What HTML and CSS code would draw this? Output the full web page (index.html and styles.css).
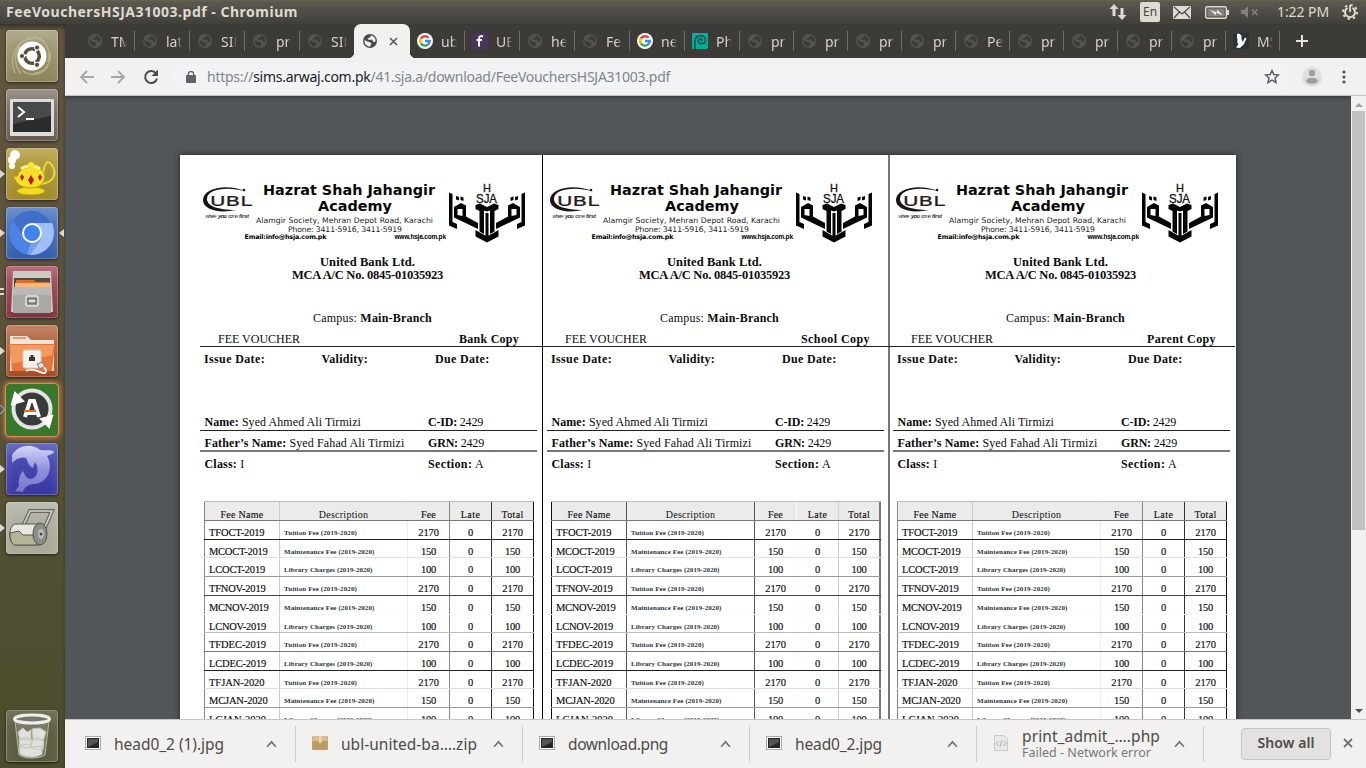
FILE: index.html
```html
<!DOCTYPE html>
<html lang="en">
<head>
<meta charset="utf-8">
<title>FeeVouchersHSJA31003.pdf - Chromium</title>
<link rel="stylesheet" href="styles.css">
</head>
<body>
<div class="desktop">
  <header class="panel">
    <span class="panel-title" data-w="292">FeeVouchersHSJA31003.pdf - Chromium</span>
    <div class="indicators">
      <svg width="18" height="18" viewBox="0 0 18 18" fill="#dfdbd2"><path d="M5 1 9.500 6H6.500V13H3.500V6H.5zM13 17 8.500 12H11.500V5H14.500V12H17.500z"/></svg>
      <span class="lang">En</span>
      <svg class="ind-mail" width="18" height="13" viewBox="0 0 18 13"><rect width="18" height="13" rx="1" fill="#dfdbd2"/><path d="M1 1 9 8 17 1M1 12 6.500 6M17 12 11.500 6" fill="none" stroke="#4a4943" stroke-width="1.300"/></svg>
      <svg class="ind-battery" width="24" height="13" viewBox="0 0 24 13"><rect x=".7" y=".7" width="20.600" height="11.600" rx="1.500" fill="none" stroke="#dfdbd2" stroke-width="1.400"/><rect x="2.500" y="2.500" width="17" height="8" fill="#85827a"/><path d="M22 4h2v5h-2z" fill="#dfdbd2"/><path d="M5 4 12 6.500V3.500L18 9.500 11 6.800V9.500z" fill="#efece4"/></svg>
      <svg class="ind-sound" width="18" height="12" viewBox="0 0 18 12"><path d="M0 4H3L7 0V12L3 8H0z" fill="#84817a"/><path d="M11 3.500 16.500 9M16.500 3.500 11 9" stroke="#84817a" stroke-width="1.600"/></svg>
      <span class="clock" data-w="52">1:22 PM</span>
      <svg class="ind-gear" width="16" height="16" viewBox="0 0 16 16" fill="none" stroke="#dfdbd2"><circle cx="8" cy="8" r="7" stroke-width="2" stroke-dasharray="2.400 3.100"/><path d="M5.500 3.800a5 5 0 1 0 5 0" stroke-width="2"/><path d="M8 1V8" stroke-width="1.800"/></svg>
    </div>
  </header>

  <nav class="launcher">
    <div class="tile tile-dash"><svg viewBox="0 0 52 52"><path d="M9 43C2 27 11 9 28 8M15 44C8 35 8 24 14 16M27 7C39 8 46 20 42 32M28 43C39 43 46 33 44 22M16 40C25 48 37 44 42 36" fill="none" stroke="#c9c5a8" stroke-width="1.500" opacity=".6"/><circle cx="26" cy="26" r="14.500" fill="#fff"/><circle cx="26" cy="26" r="7.300" fill="none" stroke="#55513a" stroke-width="3.500" stroke-dasharray="13.300 2" stroke-dashoffset="6"/><g fill="#55513a" stroke="#fff"><circle cx="16" cy="26" r="2.600"/><circle cx="31" cy="17.500" r="2.600"/><circle cx="31" cy="34.800" r="2.600"/></g></svg></div>
    <div class="tile tile-term"><svg viewBox="0 0 52 52"><rect x="4" y="10" width="44" height="37" rx="1" fill="#dcdcd8"/><rect x="7" y="13" width="38" height="30" fill="#2a2b2a"/><path d="M7 13H45V27L7 35z" fill="#474a48"/><path d="M12 18 18 23 12 28M20 30H28" fill="none" stroke="#fff" stroke-width="2"/></svg></div>
    <div class="tile tile-tea"><span class="pip"></span><svg viewBox="0 0 52 52"><g fill="#fff"><circle cx="9" cy="7" r="5"/><circle cx="6" cy="12" r="4"/><circle cx="6" cy="18" r="3"/></g><path d="M37 27C38 14 42 12 45 16 52 25 48 34 36 36" fill="none" stroke="#eadc35" stroke-width="2"/><ellipse cx="25" cy="43" rx="14" ry="4" fill="#f3dc20" stroke="#bd9f13"/><path d="M6 24C8 29 10 30 12 27 13 18 35 16 38 25 41 34 34 40 25 40 14 40 9 35 6 24z" fill="#f5df27" stroke="#bd9f13"/><path d="M15 21C20 17 30 17 34 21" fill="none" stroke="#fff18c" stroke-width="3"/><circle cx="25" cy="17" r="3" fill="#f6e339"/><path d="M25 27 28 32 25 37 22 32zM16 26 18 29 16 33 14 29zM34 26 36 29 34 33 32 29z" fill="#ba1d14"/></svg></div>
    <div class="tile tile-chromium"><span class="pip"></span><span class="pip pip-right"></span><svg viewBox="0 0 52 52"><circle cx="26" cy="26" r="22" fill="#739fee"/><path d="M7 14C15 0 37 0 45 16H26L17 30z" fill="#416fc8"/><path d="M7 14 18 31 25 36 21 47C6 45-1 28 7 14z" fill="#4c83e4"/><path d="M46 16H26L36 26 35 33 24 48C42 48 52 32 46 16z" fill="#a0bff6"/><circle cx="26" cy="26" r="10" fill="#fff"/><circle cx="26" cy="26" r="8" fill="#4284ee"/></svg></div>
    <div class="tile tile-files"><span class="bars"></span><svg viewBox="0 0 52 52"><path d="M7 5H45L47 46H5z" fill="#cecbc7"/><path d="M8 12H44V22H8z" fill="#504b45"/><path d="M10 14H28L30 16H43V22H10z" fill="#d96f2e"/><path d="M9 17H44V23H9z" fill="#f5b878"/><path d="M7 21H45V47H7z" fill="#a8a8a5"/><path d="M7 21H45V29H7z" fill="#bab9b6"/><rect x="20" y="30" width="12" height="10" rx="2" fill="#999" stroke="#e5e5e2" stroke-width="1.500"/><rect x="22" y="33" width="8" height="4" fill="#e6e6e4" stroke="#555"/></svg></div>
    <div class="tile tile-net"><span class="pip"></span><svg viewBox="0 0 52 52"><path d="M4 11H21L25 15H48V46H4z" fill="#efe4da"/><path d="M7 13H20" stroke="#ef9a62" stroke-width="2"/><path d="M3 19H49L46 46H6z" fill="#e8753a"/><path d="M4 20H48L46 30 5 39z" fill="#f39a61"/><rect x="17" y="25" width="18" height="18" rx="2" fill="#f4f1ed" stroke="#ccc"/><path d="M23 32H24.500V30H27.500V32H29V36H23z" fill="#3c3932"/><path d="M20 46C28 40 40 54 40 45L36 40" fill="none" stroke="#f3f3f3" stroke-width="1.800"/><path d="M31 39 36 37 39 41 34 44z" fill="#ddd" stroke="#777"/></svg></div>
    <div class="tile tile-update"><span class="pip pip-open"></span><svg viewBox="0 0 52 52"><circle cx="26" cy="25" r="18.500" fill="#373b39" stroke="#e4e4e4" stroke-width="4"/><path d="M6 20 9 9 17 17zM46 32 43 43 35 35z" fill="#fff" stroke="#fff" stroke-width="2"/><path d="M19 33 24 17H28L33 33M20 29H32" fill="none" stroke="#fff" stroke-width="4"/><path d="M18 27H30" stroke="#f06a27" stroke-width="2"/></svg></div>
    <div class="tile tile-dolphin"><span class="pip"></span><svg viewBox="0 0 52 52"><defs><linearGradient id="dolphinSkin" x2="0" y2="1"><stop stop-color="#d4d5fa"/><stop offset=".5" stop-color="#9293dc"/><stop offset="1" stop-color="#7576c9"/></linearGradient></defs><path d="M6 12C12 2 26 0 34 7 40 8 46 6 48 9 46 12 42 12 41 13 48 25 42 40 28 41 22 41 18 45 17 49L9 48 13 43C12 37 14 31 17 28 19 33 21 36 25 36 34 34 32 23 29 19L27 25C22 23 22 18 20 15 15 13 9 17 6 20z" fill="url(#dolphinSkin)"/></svg></div>
    <div class="tile tile-roll"><span class="pip"></span><svg viewBox="0 0 52 52"><path d="M17 24 24 9H46L37 30" fill="none" stroke="#65665f" stroke-width="4"/><path d="M17 24 24 9H46L37 30" fill="none" stroke="#d2d3cf" stroke-width="1.700"/><path d="M9 22H33V43H9C2 41 2 24 9 22z" fill="#e7e7df" stroke="#55574e"/><path d="M4 31 13 29 17 33H31V43H8C5 41 4 36 4 31z" fill="#b5b496" stroke="#55574e"/><ellipse cx="34" cy="32" rx="7" ry="11" fill="#8c8e88" stroke="#4f514c"/><ellipse cx="35" cy="32" rx="3" ry="5" fill="#bbbdb6"/><circle cx="35" cy="32" r="1.500" fill="#444"/></svg></div>
    <div class="tile tile-trash"><svg viewBox="0 0 52 52"><path d="M9 9 13 45C18 49 34 49 39 45L43 9z" fill="#8e8d75" fill-opacity=".6"/><g fill="#e0e0dc" stroke="#c4c4c0"><path d="M12 22 17 18 21 22 25 20 25 29 14 30zM26 19 34 18 40 22 37 31 27 29zM13 29 22 27 27 31 23 38 14 37zM25 30 31 27 38 31 37 40 25 38zM13 36 20 34 28 37 36 36 36 44C29 49 18 47 14 44z"/></g><path d="M9 11 13 45C19 49 33 49 39 45L43 11" fill="none" stroke="#b6b6a6"/><ellipse cx="26" cy="9" rx="17.500" ry="4" fill="#77766a" stroke="#eee" stroke-width="3"/></svg></div>
  </nav>

  <main class="browser">
    <div class="tabs" id="tabs"></div>
    <div class="toolbar">
      <svg class="nav-back" width="16" height="14" viewBox="0 0 16 14" fill="none" stroke="#a8a7a6" stroke-width="1.800"><path d="M15 7H2M8 1 2 7 8 13"/></svg>
      <svg class="nav-fwd" width="16" height="14" viewBox="0 0 16 14" fill="none" stroke="#a8a7a6" stroke-width="1.800"><path d="M0 7H13M7 1 13 7 7 13"/></svg>
      <svg class="nav-reload" width="16" height="16" viewBox="0 0 16 16"><path d="M13 4.500A6 6 0 1 0 14 9.500" fill="none" stroke="#4b4b4a" stroke-width="2"/><path d="M15 .5V7H8.500z" fill="#4b4b4a"/></svg>
      <div class="omnibox">
        <svg width="10" height="12" viewBox="0 0 10 12"><rect y="4" width="10" height="8" rx="1" fill="#5f6368"/><path d="M2.300 5V3.200a2.700 2.700 0 0 1 5.400 0V5" fill="none" stroke="#5f6368" stroke-width="1.300"/></svg>
        <span class="url" data-w="463">https://<b>sims.arwaj.com.pk</b>/41.sja.a/download/FeeVouchersHSJA31003.pdf</span>
        <svg class="star" width="16" height="15" viewBox="0 0 16 15"><path d="M8 1.500 9.800 5.600 14.400 6 11 9 12 13.500 8 11.100 4 13.500 5 9 1.600 6 6.200 5.600z" fill="none" stroke="#5a5d62" stroke-width="1.500"/></svg>
      </div>
      <svg class="avatar" width="20" height="20" viewBox="0 0 20 20"><circle cx="10" cy="10" r="10" fill="#dedede"/><circle cx="10" cy="6" r="3.200" fill="#9e9e9e"/><ellipse cx="10" cy="13.800" rx="6" ry="3" fill="#9e9e9e"/></svg>
      <svg class="kebab" width="4" height="14" viewBox="0 0 4 14" fill="#505050"><circle cx="2" cy="2" r="1.600"/><circle cx="2" cy="7" r="1.600"/><circle cx="2" cy="12" r="1.600"/></svg>
    </div>
    <div class="viewport">
      <div class="canvas"><div class="page" id="page"></div></div>
      <div class="scrollbar"><span class="sb-up"></span><span class="sb-thumb"></span><span class="sb-down"></span></div>
    </div>
    <div class="shelf">
      <div class="download"><svg class="file-icon" viewBox="0 0 16 16"><use href="#imageFile"/></svg><span class="file-name" data-w="110">head0_2 (1).jpg</span><svg class="chev" viewBox="0 0 10 7"><path d="M1 6 5 1.500 9 6"/></svg></div>
      <div class="download"><svg class="file-icon" viewBox="0 0 16 16"><rect y="1" width="16" height="14" rx="1.500" fill="#bd9b66"/><path d="M1 1H15L16 6H0z" fill="#d9bd8c"/><path d="M7 1H9.500V8H7z" fill="#eadbb9"/></svg><span class="file-name" data-w="136">ubl-united-ba….zip</span><svg class="chev" viewBox="0 0 10 7"><path d="M1 6 5 1.500 9 6"/></svg></div>
      <div class="download"><svg class="file-icon" viewBox="0 0 16 16"><use href="#imageFile"/></svg><span class="file-name" data-w="100">download.png</span><svg class="chev" viewBox="0 0 10 7"><path d="M1 6 5 1.500 9 6"/></svg></div>
      <div class="download"><svg class="file-icon" viewBox="0 0 16 16"><g id="imageFile"><rect x=".5" y="1.500" width="15" height="13" fill="#fff" stroke="#aaa"/><rect x="2" y="3" width="12" height="10" fill="#262626"/><path d="M3 4H13V7L3 12z" fill="#555"/></g></svg><span class="file-name" data-w="87">head0_2.jpg</span><svg class="chev" viewBox="0 0 10 7"><path d="M1 6 5 1.500 9 6"/></svg></div>
      <div class="download"><svg class="file-icon" viewBox="0 0 16 16"><path d="M1.500.5H11L14.500 4V15.500H1.500z" fill="#e8e8e8" stroke="#cacaca"/><path d="M5.500 6 3 8.500 5.500 11M10.500 6 13 8.500 10.500 11M9 5.500 7 11.500" fill="none" stroke="#aaa"/></svg><div class="failed"><span class="file-name" data-w="138">print_admit_….php</span><span class="file-state" data-w="129">Failed - Network error</span></div><svg class="chev" viewBox="0 0 10 7"><path d="M1 6 5 1.500 9 6"/></svg></div>
      <div class="show-all"><span data-w="57">Show all</span></div>
      <svg class="shelf-close" width="10" height="10" viewBox="0 0 10 10"><path d="M1 1 9 9M9 1 1 9" stroke="#74716e" stroke-width="1.800"/></svg>
    </div>
  </main>
</div>
<script src="app.js"></script>
</body>
</html>
```
FILE: styles.css
```css
* { box-sizing: border-box; }
body { margin: 0; overflow: hidden; font-family: "Noto Sans", "Open Sans", sans-serif; }
svg { display: block; flex: none; }
span[data-w] { display: inline-block; white-space: pre; }
.desktop { width: 1366px; height: 768px; display: grid; grid-template: 24px 744px / 65px 1301px; background: #3c3b37; }

.panel { grid-column: 1 / 3; display: flex; align-items: center; justify-content: space-between; padding: 0 8px 0 6px; background: linear-gradient(#67634f 0, #5b584f 2px, #403f3a 24px); color: #dfdbd2; }
.panel-title { font-size: 14px; font-weight: 700; line-height: 20px; padding-bottom: 1px; }
.indicators { display: flex; align-items: center; }
.lang { margin-left: 13px; width: 20px; height: 20px; border-radius: 2px; background: #dfdbd2; color: #45443f; font-size: 12px; line-height: 20px; text-align: center; }
.ind-mail { margin-left: 13px; }
.ind-battery { margin-left: 14px; }
.ind-sound { margin-left: 12px; }
.clock { margin-left: 18px; padding-bottom: 1px; font-size: 14px; }
.ind-gear { margin-left: 13px; }

.launcher { display: flex; flex-direction: column; gap: 7px; padding: 6px 0 6px 6px; background: linear-gradient(90deg, transparent 62px, #3a292866 65px), linear-gradient(#37322a 0, #625640 7px, #5d523c 35%, #535034 65%, #4c4d2d); }
.tile { position: relative; width: 52px; height: 52px; border-radius: 4px; box-shadow: inset 0 0 0 1px #ffffff38, inset 0 10px 12px #ffffff24, 0 1px 3px #0009; }
.tile svg { width: 52px; height: 52px; }
.tile-dash { background: linear-gradient(#a5a07e, #8c8459); }
.tile-term { background: linear-gradient(#8b8177, #645a4e); }
.tile-tea { background: linear-gradient(#b7a246, #a18a2b); }
.tile-chromium { background: linear-gradient(#557fc5, #335da9); }
.tile-files { background: linear-gradient(#ae5364, #80303d); }
.tile-net { background: linear-gradient(#ba7350, #a24d26); }
.tile-update { background: #39772b; box-shadow: 0 0 0 1px #d8905a, 0 0 5px 2px #d77b3b; }
.tile-dolphin { background: linear-gradient(#5155ba, #3a36a2); }
.tile-roll { background: linear-gradient(#b3b3a8, #aaa996); }
.tile-trash { margin-top: auto; background: #69684e99; }
.pip { position: absolute; left: -6px; top: 22px; border: 4px solid transparent; border-left: 5px solid #ddd9d2; border-right: 0; }
.pip-right { left: 53px; border-left: 0; border-right: 5px solid #ddd9d2; }
.pip-open { left: -9px; width: 7px; height: 7px; border: 1px solid #69b6da; transform: rotate(45deg); }
.bars { position: absolute; left: -6px; top: 22px; width: 4px; height: 7px; border: solid #ddd9d2; border-width: 2px 0; }

.browser { display: flex; flex-direction: column; min-width: 0; }
.tabs { display: flex; height: 34px; padding-left: 15px; background: #3c3b37; color: #d6d2ca; font-size: 14px; }
.tab { flex: none; display: flex; align-items: center; width: 55px; padding-left: 8px; position: relative; }
.tab.narrow { width: 54px; }
.tab::after { content: ""; margin-left: auto; width: 1px; height: 20px; background: #716f69; }
.tab.no-sep::after { background: transparent; }
.tab-icon { width: 14px; height: 14px; }
.tab-icon.big { width: 16px; height: 16px; margin-left: -1px; margin-right: -1px; }
.tab-text { margin-left: 9px; width: 16px; overflow: hidden; white-space: nowrap; -webkit-mask-image: linear-gradient(90deg, #000 65%, transparent); mask-image: linear-gradient(90deg, #000 65%, transparent); }
.tab.active { margin-left: -1px; width: 56px; padding-left: 9px; background: #f2f1f0; border-radius: 7px 7px 0 0; }
.tab.active::after { display: none; }
.tab.active::before { content: ""; position: absolute; left: -6px; right: -6px; bottom: 0; height: 6px; background: radial-gradient(circle at 0 0, transparent 6px, #f2f1f0 6.500px) left / 6px 6px no-repeat, radial-gradient(circle at 100% 0, transparent 6px, #f2f1f0 6.500px) right / 6px 6px no-repeat; }
.tab-close { width: 9px; height: 9px; margin-left: 12px; }
.new-tab { margin: 11px 0 0 16px; }

.toolbar { display: flex; align-items: center; height: 38px; padding-left: 14px; background: #f2f1f0; border-bottom: 1px solid #c3c2c0; }
.nav-fwd { margin-left: 16px; }
.nav-reload { margin-left: 16px; }
.omnibox { flex: none; display: flex; align-items: center; width: 1117px; height: 28px; margin-left: 13px; padding-left: 14px; border-radius: 14px; background: #f1f3f4; }
.url { margin-left: 11px; padding-bottom: 1px; font-size: 14px; color: #80868b; }
.url b { font-weight: 400; color: #202124; }
.star { margin-left: auto; margin-right: 9px; }
.avatar { margin-left: 13px; }
.kebab { margin-left: 20px; }

.viewport { display: flex; height: 623px; background: #525659; }
.canvas { flex: 1; height: 623px; overflow: hidden; padding: 59px 0 0 115px; box-shadow: inset 0 5px 4px -4px #303336; }
.page { display: flex; width: 1056px; height: 760px; padding-left: 16px; background: #fff; box-shadow: 0 0 5px 1px #303336; }
.scrollbar { width: 15px; display: flex; flex-direction: column; align-items: center; background: #f1f1f1; }
.sb-up { height: 5px; margin: 6px 0 4px; border: 4px solid transparent; border-top: 0; border-bottom: 4px solid #a3a3a3; }
.sb-thumb { width: 13px; height: 419px; background: #c1c1c1; }
.sb-down { margin: auto 0 6px; border: 4px solid transparent; border-bottom: 0; border-top: 4px solid #505050; }

.voucher { flex: none; width: 347px; padding-top: 27px; font-family: "Liberation Serif", serif; font-size: 12px; line-height: 14px; color: #0c0c0c; border-right: 1px solid #000; }
.voucher:nth-child(2) { border-right: 2px solid #777; }
.voucher:nth-child(3) { width: 346px; border-right: 0; margin-left: -1px; }
.letterhead { margin-left: 4px; }
.bank { width: 338px; margin: 12px 0 0 4px; padding-right: 3px; text-align: center; font-weight: 700; line-height: 13px; font-size: 12.500px; }
.bank span { display: block; width: max-content; margin: 0 auto; }
.campus { margin-top: 29px; padding-left: 117px; white-space: pre; }
.copy { display: flex; justify-content: space-between; height: 15px; margin: 7px -5px 0 4px; padding: 0 28px 0 18px; border-bottom: 1px solid #222; }
.voucher:nth-child(2) .copy { padding-right: 23px; }
.voucher:nth-child(3) .copy { margin-right: 0; padding-right: 19px; }
.dates { display: grid; grid-template-columns: 117.500px 113.500px 1fr; margin-top: 5px; padding-left: 8px; font-weight: 700; }
.person { display: grid; grid-template-columns: 223.500px 1fr; width: 337px; margin-left: 4px; padding-left: 4.500px; }
.person.first { height: 16px; margin-top: 49px; border-bottom: 1px solid #222; }
.person.father { height: 21px; padding-top: 5px; border-bottom: 2px solid #777; }
.person.class { margin-top: 5px; }
.fees { margin: 30px 0 0 8px; width: 330px; border-top: 1px solid #bbb; }
.row { display: grid; grid-template-columns: 75px 128px 42px 42px 43px; }
.row > div { border-left: 1px solid #888; padding-top: 5px; text-align: center; white-space: nowrap; overflow: hidden; font-size: 10.500px; line-height: 13px; -webkit-text-stroke: .15px; }
.row > div:nth-child(1), .row > div:nth-child(2) { text-align: left; padding-left: 4px; }
.row > div:nth-child(2) { border-left-color: #ccc; font-size: 7px; font-weight: 700; color: #2c3542; padding-top: 6px; -webkit-text-stroke: 0; }
.row > div:nth-child(3) { border-left-color: #eee; }
.row > div:nth-child(5) { border-left-color: #333; border-right: 1px solid #111; }
.voucher:nth-child(2) .row > div { border-left-color: #555; }
.voucher:nth-child(2) .row > div:first-child { border-left-color: #111; }
.voucher:nth-child(2) .row > div:nth-child(4) { border-left-color: #fafafa; }
.voucher:nth-child(2) .row > div:nth-child(5) { border-left-color: #ccc; border-right: 2px solid #777; }
.row.head { background: #ebebeb; }
.voucher .row.head > div { text-align: center; padding: 6px 0 0; font-size: 10px; font-weight: 400; color: #111; }

.shelf { display: flex; align-items: center; height: 49px; padding-left: 4px; background: #f2f1f0; border-top: 1px solid #c6c5c3; color: #4c4b49; }
.download { flex: none; display: flex; align-items: center; width: 227px; height: 36px; padding: 0 18px 0 16px; border-right: 1px solid #cfcecc; }
.file-icon { width: 16px; height: 16px; margin: -3px 13px 0 0; }
.file-name { font-size: 15.500px; line-height: 20px; }
.chev { width: 11px; height: 8px; margin-left: auto; fill: none; stroke: #777; stroke-width: 1.600; }
.failed { display: flex; flex-direction: column; align-items: flex-start; }
.failed .file-name { line-height: 17px; }
.file-state { font-size: 12.500px; line-height: 15px; color: #777; }
.show-all { flex: none; display: flex; align-items: center; justify-content: center; width: 90px; height: 32px; margin-left: 37px; padding-bottom: 3px; border: 1px solid #c5c4c2; border-radius: 4px; background: #e3e2e1; font-size: 14px; font-weight: 600; }
.shelf-close { margin: -3px 0 0 12px; }
```
FILE: app.js
```js
const globe = c => `<svg class="tab-icon" viewBox="0 0 14 14"><circle cx="7" cy="7" r="7" fill="${c.fg}"/><path d="M1.500 6 4 7.500 6.500 8 8.500 9.500 7 12.500C4 12.500 1 10 1.500 6zM8 1.500 7 3.500 4.500 4.500 6 6 9 5.500 10.500 8 12.500 7.500C13 4 11 2 8 1.500z" fill="${c.bg}"/></svg>`;
const dim = globe({ fg: '#55534f', bg: '#3c3b37' });
const google = `<svg class="tab-icon big" viewBox="0 0 16 16"><circle cx="8" cy="8" r="8" fill="#fff"/><g fill="none" stroke-width="2.400"><path d="M4 5.500A4.700 4.700 0 0 1 11.500 4.800" stroke="#ea4335"/><path d="M4 5.500A4.700 4.700 0 0 0 4 10.500" stroke="#fbbc05"/><path d="M4 10.500A4.700 4.700 0 0 0 11 11.500" stroke="#34a853"/><path d="M11 11.500A4.700 4.700 0 0 0 12.700 8H8" stroke="#4285f4"/></g></svg>`;
const fIcon = `<svg class="tab-icon big" viewBox="0 0 16 16"><rect width="16" height="16" rx="1" fill="#48345d"/><path d="M11 3.500C8.500 2.500 7 3.500 7 6V13.500M4.500 7H10" fill="none" stroke="#fff" stroke-width="2"/></svg>`;
const pIcon = `<svg class="tab-icon big" viewBox="0 0 16 16"><rect width="16" height="16" rx="1" fill="#00ad97"/><path d="M3 16V8.500C3 1 13.500 1 13.500 7 13.500 12 6 11.500 6.300 8 7 4.500 11.500 6 9.500 8.300" fill="none" stroke="#24514b" stroke-width="1.600"/></svg>`;
const mIcon = `<svg class="tab-icon big" viewBox="0 0 16 16"><rect width="16" height="16" fill="#28343c"/><path d="M4 1C8 0 9 3 8.500 6L9.500 9 12 4.500 13.500 5.500 11 11 8.500 13.500 7 15 3 14.500 5.500 11C3 9 5.500 7 4 5z" fill="#fff"/></svg>`;
const tabs = [['TM'], ['lat'], ['SIM'], ['pr'], ['SIM'], null, ['ub', google], ['UB', fIcon], ['he'], ['Fe'], ['ne', google], ['Ph', pIcon],
  ['pr'], ['pr'], ['pr'], ['pr'], ['Pe'], ['pr'], ['pr'], ['pr'], ['pr'], ['MS', mIcon]];
document.getElementById('tabs').innerHTML = tabs.map((t, i) => t
  ? `<div class="tab${i > 11 ? ' narrow' : ''}${i === 4 ? ' no-sep' : ''}">${t[1] || dim}<span class="tab-text">${t[0]}</span></div>`
  : `<div class="tab active">${globe({ fg: '#4b4b4b', bg: '#f2f1f0' })}<svg class="tab-close" viewBox="0 0 9 9"><path d="M1 1 8 8M8 1 1 8" stroke="#555" stroke-width="1.500"/></svg></div>`
).join('') + '<svg class="new-tab" width="12" height="12" viewBox="0 0 12 12"><path d="M6 0V12M0 6H12" stroke="#e4e1da" stroke-width="2"/></svg>';

// Left half of the academy crest; the right half mirrors it.
const half = `<path d="M249 10.500 252.500 12V40L257 42V47L249 43.500zM256 14 259 15V18.500L256 17.500zM260.500 14.500 263.500 15.500V19L260.500 18z"/><path fill-rule="evenodd" d="M254 25 261 21 266 23.500V34.500L278 41V47L254 35.500zM257.500 27V33L262.500 34V27z"/><path d="M275.500 23 280 21.500 287 25V29.500L284 28.500V52L279.500 49.500V29L275.500 27z"/><path d="M285.500 31H287V55H285.500zM275.500 48 279 50 287 54.500V60.500L275.500 54.500z"/>`;
const letterhead = `<svg class="letterhead" width="338" height="62" viewBox="0 0 338 62">
<path d="M46 9.500C27 1 3 6 3 18 3 27 17 32 36 28 18 28 7 24 7 17 7 7 27 4 46 9.500z" fill="#17151a"/>
<circle cx="44" cy="8" r="1.300" fill="#17151a"/>
<g font-family="DejaVu Sans, sans-serif"><text x="10" y="24" font-size="14.500" textLength="42" lengthAdjust="spacingAndGlyphs" fill="#241b22" stroke="#241b22" stroke-width=".2">UBL</text>
<g font-family="Liberation Sans, sans-serif" font-size="5.500" font-style="italic" fill="#333"><text x="5.500" y="36" textLength="11">where</text><text x="18" y="36" font-weight="700" font-size="6" textLength="9">you</text><text x="28" y="36" textLength="10">come</text><text x="39" y="36" font-weight="700" font-size="6" textLength="10">first</text></g>
<g font-weight="700" font-size="14.500" fill="#080808"><text x="63" y="12.500" textLength="172" lengthAdjust="spacingAndGlyphs">Hazrat Shah Jahangir</text><text x="118" y="28.500" textLength="74" lengthAdjust="spacingAndGlyphs">Academy</text></g>
<g font-size="7.700" fill="#222"><text x="56" y="41" textLength="177">Alamgir Society, Mehran Depot Road, Karachi</text><text x="88" y="50" textLength="114">Phone: 3411-5916, 3411-5919</text></g>
<text x="44.500" y="57" font-size="6.400" font-weight="700" textLength="82">Email:info@hsja.com.pk</text></g>
<text x="194.500" y="57" font-family="Liberation Sans, sans-serif" font-size="6.500" font-weight="700" textLength="51.500">www.hsja.com.pk</text>
<g font-family="Liberation Sans, sans-serif" fill="#111" stroke="#111" stroke-width=".3"><text x="283" y="9.500" font-size="11" textLength="8">H</text><text x="276" y="21" font-size="12" textLength="21" lengthAdjust="spacingAndGlyphs">SJA</text></g>
<g fill="#050505">${half}</g><g fill="#050505" transform="translate(574 0) scale(-1 1)">${half}</g></svg>`;

const kinds = { TF: ['Tuition Fee (2019-2020)', 73, '2170'], MC: ['Maintenance Fee (2019-2020)', 90.5, '150'], LC: ['Library Charges (2019-2020)', 88.5, '100'] };
// name, text width, row height, rule colour
const rows = [['TFOCT-2019', 55.5, 19, '#222'], ['MCOCT-2019', 58.5, 18, '#e0e0e0'], ['LCOCT-2019', 56, 19, '#999'], ['TFNOV-2019', 56.5, 19, '#444'], ['MCNOV-2019', 59.5, 19, '#fafafa'], ['LCNOV-2019', 57, 18, '#bbb'], ['TFDEC-2019', 57, 19, '#777'], ['LCDEC-2019', 57, 19, '#222'], ['TFJAN-2020', 55.5, 18, '#ddd'], ['MCJAN-2020', 58.5, 19, '#999'], ['LCJAN-2020', 57, 19, '#444']];
const s = (text, w) => `<span data-w="${w}">${text}</span>`;
const line = (cells, h, c, cls = '') => `<div class="row ${cls}" style="height:${h}px;border-bottom:1px solid ${c}">${cells.map(x => `<div>${x}</div>`).join('')}</div>`;
const table = line([s('Fee Name', 43), s('Description', 49.5), s('Fee', 15), s('Late', 19.5), s('Total', 22)], 19, '#777', 'head') +
  rows.map(([name, w, h, c]) => {
    const [desc, dw, amount] = kinds[name.slice(0, 2)];
    const a = s(amount, amount.length === 4 ? 20.5 : 15);
    return line([s(name, w), s(desc, dw), a, '0', a], h, c);
  }).join('');
document.getElementById('page').innerHTML = [['Bank Copy', 60], ['School Copy', 69], ['Parent Copy', 69]].map(([copy, w]) => `<section class="voucher">${letterhead}
<div class="bank"><div>${s('United Bank Ltd.', 95)}</div><div>${s('MCA A/C No. 0845-01035923', 151)}</div></div>
<div class="campus">${s('Campus: <b>Main-Branch</b>', 119)}</div>
<div class="copy">${s('FEE VOUCHER', 82)}<b>${s(copy, w)}</b></div>
<div class="dates"><div>${s('Issue Date:', 61)}</div><div>${s('Validity:', 46.5)}</div><div>${s('Due Date:', 54.5)}</div></div>
<div class="person first"><div>${s('<b>Name:</b> Syed Ahmed Ali Tirmizi', 156.5)}</div><div>${s('<b>C-ID:</b> 2429', 55)}</div></div>
<div class="person father"><div>${s('<b>Father’s Name:</b> Syed Fahad Ali Tirmizi', 200)}</div><div>${s('<b>GRN:</b> 2429', 56)}</div></div>
<div class="person class"><div>${s('<b>Class:</b> I', 40)}</div><div>${s('<b>Section:</b> A', 56)}</div></div>
<div class="fees">${table}</div></section>`).join('');

// Track each label to its nominal width.
document.querySelectorAll('[data-w]').forEach(el => {
  const w = +el.dataset.w;
  const natural = el.getBoundingClientRect().width;
  el.style.letterSpacing = ((w - natural) / el.textContent.length).toFixed(3) + 'px';
});
```
